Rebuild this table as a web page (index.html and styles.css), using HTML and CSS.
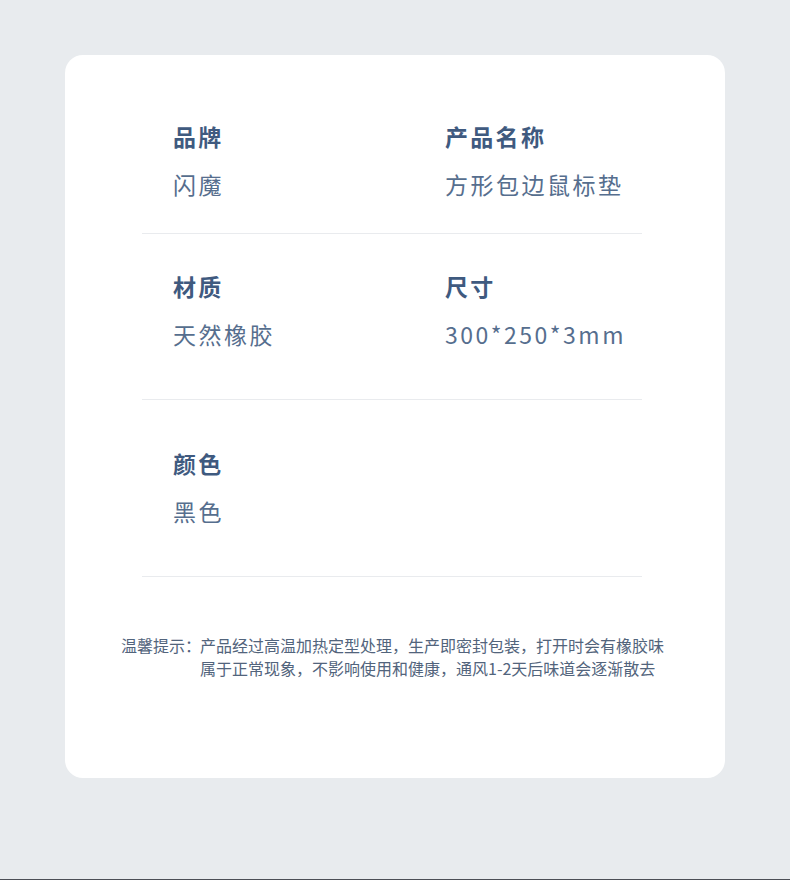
FILE: index.html
```html
<!DOCTYPE html>
<html lang="zh-CN">
<head>
<meta charset="utf-8">
<title>产品参数</title>
<link rel="stylesheet" href="styles.css">
</head>
<body>
<div class="page">
  <div class="card">
    <div class="specs">
      <div class="row row-1">
        <div class="cell">
          <div class="label">品牌</div>
          <div class="value">闪魔</div>
        </div>
        <div class="cell">
          <div class="label">产品名称</div>
          <div class="value">方形包边鼠标垫</div>
        </div>
      </div>
      <div class="row row-2">
        <div class="cell">
          <div class="label">材质</div>
          <div class="value">天然橡胶</div>
        </div>
        <div class="cell">
          <div class="label">尺寸</div>
          <div class="value">300*250*3mm</div>
        </div>
      </div>
      <div class="row row-3">
        <div class="cell">
          <div class="label">颜色</div>
          <div class="value">黑色</div>
        </div>
      </div>
    </div>
    <div class="note">
      <span class="note-title">温馨提示：</span>
      <p class="note-text">产品经过高温加热定型处理，生产即密封包装，打开时会有橡胶味<br>属于正常现象，不影响使用和健康，通风1-2天后味道会逐渐散去</p>
    </div>
  </div>
</div>
</body>
</html>
```
FILE: styles.css
```css
* { box-sizing: border-box; }
html, body {
  margin: 0;
  padding: 0;
  background: #e8ebee;
}
body {
  font-family: "Noto Sans CJK SC", "Noto Sans", sans-serif;
}
.page {
  height: 880px;
  padding-top: 55px;
  padding-left: 65px;
  border-bottom: 1px solid #4b4e56;
}
.card {
  width: 660px;
  height: 723px;
  background: #ffffff;
  border-radius: 18px;
  padding: 0 0 0 56px;
}
.specs {
  margin-left: 21px;
  width: 500px;
}
.row {
  display: grid;
  grid-template-columns: 272px 1fr;
  padding-left: 31px;
  border-bottom: 1px solid #e9ebee;
}
.row-1 { padding-top: 65px; padding-bottom: 33px; }
.row-2 { padding-top: 36px; padding-bottom: 49px; }
.row-3 { padding-top: 47px; padding-bottom: 49px; }
.label {
  font-size: 23px;
  line-height: 32px;
  font-weight: 700;
  color: #3f5a7f;
  letter-spacing: 2.3px;
}
.value {
  margin-top: 16px;
  font-size: 23px;
  line-height: 32px;
  font-weight: 400;
  color: #566e8e;
  letter-spacing: 2.5px;
}
.note {
  display: flex;
  margin-top: 57px;
  font-size: 16px;
  line-height: 23px;
  color: #52647c;
}
.note-title {
  flex: none;
  width: 79px;
  white-space: nowrap;
}
.note-text {
  margin: 0;
  white-space: nowrap;
}
```
